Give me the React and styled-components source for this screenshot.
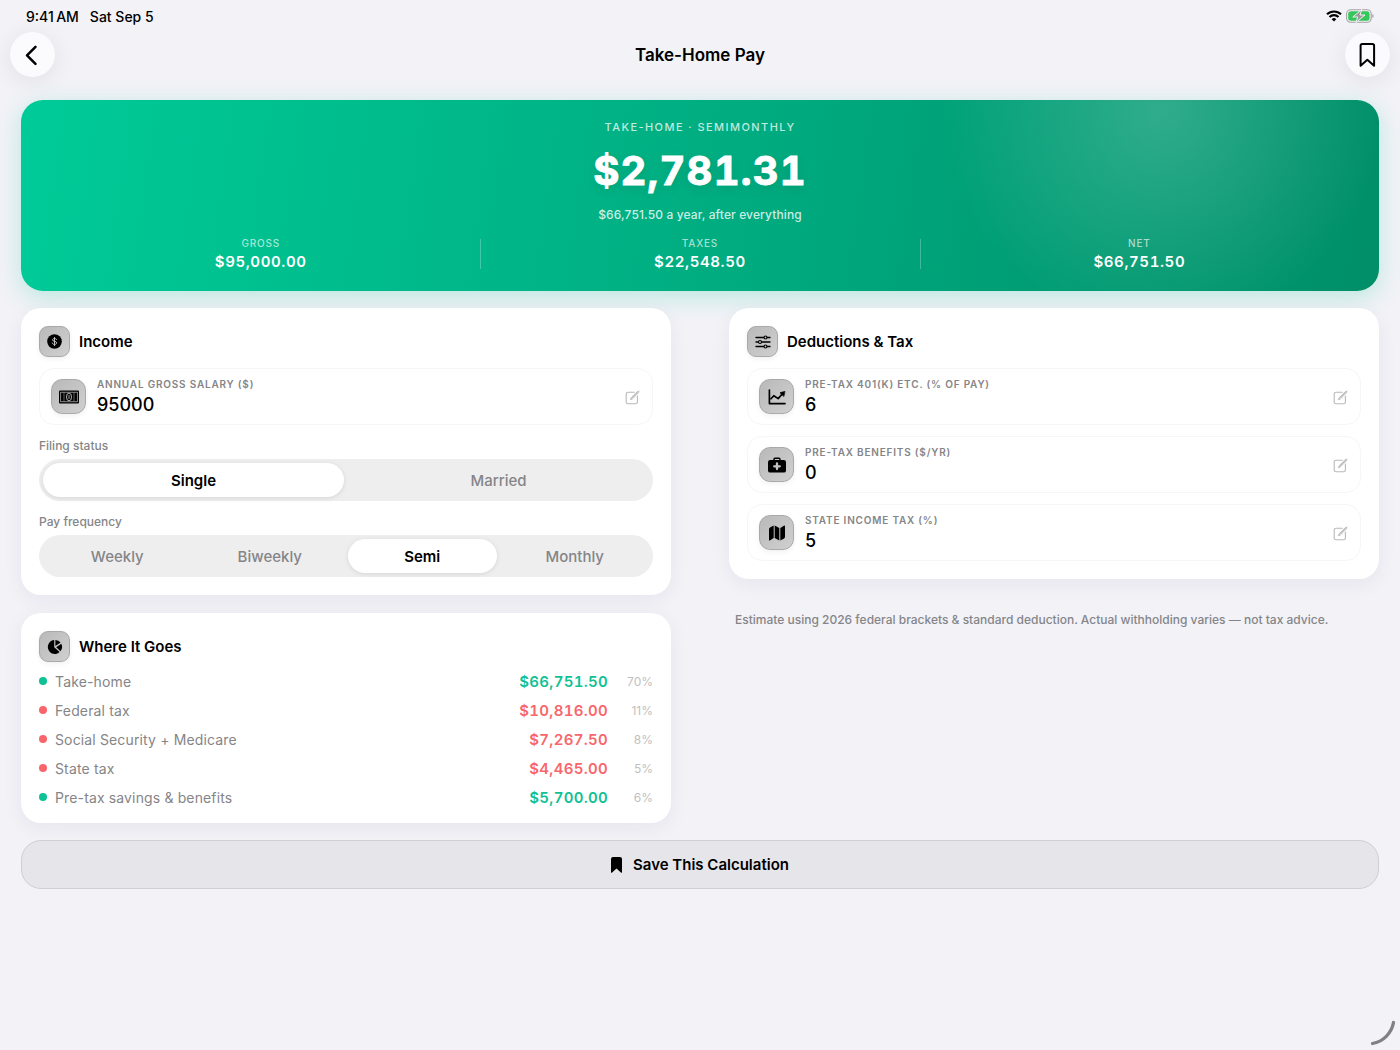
import React, { useState } from "react";
import styled, { createGlobalStyle } from "styled-components";

const BREAKDOWN = [
  { name: "Take-home", amount: "$66,751.50", share: "70%", kind: "keep" },
  { name: "Federal tax", amount: "$10,816.00", share: "11%", kind: "tax" },
  { name: "Social Security + Medicare", amount: "$7,267.50", share: "8%", kind: "tax" },
  { name: "State tax", amount: "$4,465.00", share: "5%", kind: "tax" },
  { name: "Pre-tax savings & benefits", amount: "$5,700.00", share: "6%", kind: "keep" },
];

const TOTALS = [
  { name: "Gross", amount: "$95,000.00" },
  { name: "Taxes", amount: "$22,548.50" },
  { name: "Net", amount: "$66,751.50" },
];

const COLORS = { keep: "#0fc194", tax: "#f8666b" };

export default function App() {
  const [form, setForm] = useState({
    salary: "95000",
    retirement: "6",
    benefits: "0",
    stateTax: "5",
    status: "Single",
    frequency: "Semi",
  });

  const update = (name, value) => setForm({ ...form, [name]: value });

  return (
    <Page>
      <GlobalStyle />
      <StatusBar>
        <StatusText>
          <span>9:41{"\u2009"}AM</span>
          <span>Sat Sep 5</span>
        </StatusText>
        <StatusIcons>
          <WifiIcon />
          <BatteryIcon />
        </StatusIcons>
      </StatusBar>
      <NavBar>
        <RoundButton type="button" aria-label="Back">
          <svg width="24" height="24" viewBox="0 0 24 24" fill="none" stroke="#000" strokeWidth="2.5" strokeLinecap="round" strokeLinejoin="round">
            <path d="M14.500 3.800 6 12.400l8.500 8.500" />
          </svg>
        </RoundButton>
        <h1>Take-Home Pay</h1>
        <RoundButton type="button" aria-label="Bookmark">
          <svg width="24" height="26" viewBox="0 0 24 26" fill="none" stroke="#000" strokeWidth="2" strokeLinejoin="round">
            <path d="M4.600 3.800q0-1.800 1.800-1.800h9.900q1.800 0 1.800 1.800v20L11.350 17.700 4.600 23.800z" />
          </svg>
        </RoundButton>
      </NavBar>

      <Content>
        <Hero>
          <HeroLabel>Take-home · Semimonthly</HeroLabel>
          <HeroAmount>$2,781.31</HeroAmount>
          <HeroNote>$66,751.50 a year, after everything</HeroNote>
          <Totals>
            {TOTALS.map((t) => (
              <Total key={t.name}>
                <dt>{t.name}</dt>
                <dd>{t.amount}</dd>
              </Total>
            ))}
          </Totals>
        </Hero>

        <Columns>
          <Column>
            <Card>
              <CardHeader>
                <Tile $size={31}>
                  <DollarIcon />
                </Tile>
                <h2>Income</h2>
              </CardHeader>
              <Field
                icon={<BanknoteIcon />}
                id="salary"
                label="Annual gross salary ($)"
                value={form.salary}
                onChange={update}
              />
              <Segmented
                name="status"
                label="Filing status"
                options={["Single", "Married"]}
                value={form.status}
                onChange={update}
              />
              <Segmented
                name="frequency"
                label="Pay frequency"
                options={["Weekly", "Biweekly", "Semi", "Monthly"]}
                value={form.frequency}
                onChange={update}
              />
            </Card>

            <Card>
              <CardHeader>
                <Tile $size={31}>
                  <PieIcon />
                </Tile>
                <h2>Where It Goes</h2>
              </CardHeader>
              <Breakdown>
                <tbody>
                  {BREAKDOWN.map((row) => (
                    <BreakdownRow key={row.name} $color={COLORS[row.kind]}>
                      <th scope="row">{row.name}</th>
                      <Amount>{row.amount}</Amount>
                      <Share>{row.share}</Share>
                    </BreakdownRow>
                  ))}
                </tbody>
              </Breakdown>
            </Card>
          </Column>

          <Column>
            <Card>
              <CardHeader>
                <Tile $size={31}>
                  <SlidersIcon />
                </Tile>
                <h2>Deductions &amp; Tax</h2>
              </CardHeader>
              <Field
                icon={<ChartIcon />}
                id="retirement"
                label="Pre-tax 401(k) etc. (% of pay)"
                value={form.retirement}
                onChange={update}
              />
              <Field
                icon={<CaseIcon />}
                id="benefits"
                label="Pre-tax benefits ($/yr)"
                value={form.benefits}
                onChange={update}
              />
              <Field
                icon={<MapIcon />}
                id="stateTax"
                label="State income tax (%)"
                value={form.stateTax}
                onChange={update}
              />
            </Card>
            <Disclaimer>
              Estimate using 2026 federal brackets &amp; standard deduction. Actual withholding varies — not tax advice.
            </Disclaimer>
          </Column>
        </Columns>

        <SaveButton type="button">
          <svg width="11" height="16" viewBox="0 0 11 16">
            <path d="M0 2q0-2 2-2h7q2 0 2 2v13q0 1.4-1.1.5L5.500 11.600 1.100 15.500Q0 16.400 0 15z" />
          </svg>
          Save This Calculation
        </SaveButton>
      </Content>

      <ResizeHandle width="26" height="26" viewBox="0 0 26 26">
        <path d="M2.500 23.500A26 26 0 0 0 23.500 2.500" fill="none" stroke="#808084" strokeWidth="3.300" strokeLinecap="round" />
      </ResizeHandle>
    </Page>
  );
}

function Field({ icon, id, label, value, onChange }) {
  return (
    <FieldBox>
      <Tile $size={35}>{icon}</Tile>
      <FieldText>
        <label htmlFor={id}>{label}</label>
        <input
          id={id}
          type="text"
          inputMode="decimal"
          value={value}
          onChange={(e) => onChange(id, e.target.value)}
        />
      </FieldText>
      <EditIcon />
    </FieldBox>
  );
}

function Segmented({ name, label, options, value, onChange }) {
  return (
    <SegmentGroup>
      <legend>{label}</legend>
      <SegmentTrack>
        {options.map((option) => (
          <Segment key={option} $active={option === value}>
            <input
              type="radio"
              name={name}
              value={option}
              checked={option === value}
              onChange={() => onChange(name, option)}
            />
            {option}
          </Segment>
        ))}
      </SegmentTrack>
    </SegmentGroup>
  );
}

const WifiIcon = () => (
  <svg width="16" height="12" viewBox="0 0 16 12" fill="none" stroke="#000" strokeWidth="2.1">
    <path d="M1 4.300a10 10 0 0 1 14 0" />
    <path d="M3.500 7a6.400 6.400 0 0 1 9 0" />
    <path d="M8 11.600 5.700 9.200a3.300 3.300 0 0 1 4.600 0z" fill="#000" stroke="none" />
  </svg>
);

const BatteryIcon = () => (
  <svg width="28" height="14" viewBox="0 0 28 14">
    <rect x="0.600" y="0.700" width="24.600" height="12.600" rx="4" fill="none" stroke="#a3a3a6" strokeWidth="1.100" />
    <rect x="2.200" y="2.300" width="21.400" height="9.400" rx="2.600" fill="#34c759" />
    <path d="M26.300 5v4q1.400-.6 1.400-2t-1.400-2z" fill="#a3a3a6" />
    <path d="M15.800 0.400 6.800 8h5l-2 5.600L19 6h-5z" fill="#9b9b9e" stroke="#f2f2f7" strokeWidth="1" strokeLinejoin="round" />
  </svg>
);

const DollarIcon = () => (
  <svg width="15" height="15" viewBox="0 0 15 15">
    <circle cx="7.500" cy="7.500" r="7.300" />
    <path d="M9.700 5.700C9.400 4.900 8.600 4.500 7.500 4.500c-1.200 0-2 .6-2 1.400 0 1.900 4.200 1 4.200 3 0 .9-.9 1.500-2.200 1.500-1.200 0-2.100-.5-2.300-1.400M7.500 3.500v8" fill="none" stroke="#c4c4c4" strokeWidth="1" strokeLinecap="round" />
  </svg>
);

const BanknoteIcon = () => (
  <svg width="20" height="14" viewBox="0 0 20 14">
    <rect x="0" y="0.500" width="20" height="13" rx="1" />
    <rect x="1.700" y="2.200" width="16.600" height="9.600" fill="none" stroke="#bdbdbd" strokeWidth="0.700" />
    <path d="M5 2.200v9.600M15 2.200v9.600" stroke="#bdbdbd" strokeWidth="0.500" />
    <ellipse cx="10" cy="7" rx="2.500" ry="3.900" fill="#000" stroke="#c4c4c4" strokeWidth="0.900" />
    <path d="M10 5v4" stroke="#c4c4c4" strokeWidth="0.800" />
  </svg>
);

const PieIcon = () => (
  <svg width="16" height="16" viewBox="0 0 16 16">
    <path d="M7.200 1A7 7 0 1 0 12.600 13.100L7.200 8.300z" />
    <path d="M8.400.9a7 7 0 0 1 5.200 2.700L8.400 7z" />
    <path d="M14.300 4.700a7 7 0 0 1-.8 7.500L9.200 8.200z" />
  </svg>
);

const SlidersIcon = () => (
  <svg width="16" height="14" viewBox="0 0 16 14" fill="none" stroke="#000" strokeWidth="1.400" strokeLinecap="round">
    <path d="M1 2.500h7.700M12.300 2.500H15M1 7h2.200M6.800 7H15M1 11.500h7.700M12.300 11.500H15" />
    <circle cx="10.500" cy="2.500" r="1.500" strokeWidth="1.100" />
    <circle cx="5" cy="7" r="1.500" strokeWidth="1.100" />
    <circle cx="10.500" cy="11.500" r="1.500" strokeWidth="1.100" />
  </svg>
);

const ChartIcon = () => (
  <svg width="18" height="16" viewBox="0 0 18 16" fill="none" stroke="#000" strokeWidth="1.700" strokeLinecap="round" strokeLinejoin="round">
    <path d="M1.400 1v13.600H17" />
    <path d="M3 9.800 5.800 6.700l4.400 2.900L14.200 5" />
    <path d="M16.600 2.600 12 3.700l3.600 3.500z" fill="#000" strokeWidth="0.800" />
  </svg>
);

const CaseIcon = () => (
  <svg width="18" height="16" viewBox="0 0 18 16">
    <path d="M6 3.600V2.200Q6 1.200 7 1.200h4q1 0 1 1v1.400" fill="none" stroke="#000" strokeWidth="1.400" />
    <rect x="0" y="3" width="18" height="12.600" rx="2.200" />
    <path d="M9 6.500v5.600M6.200 9.300h5.600" stroke="#c4c4c4" strokeWidth="2.300" strokeLinecap="round" />
  </svg>
);

const MapIcon = () => (
  <svg width="16" height="16" viewBox="0 0 16 16">
    <path d="M0 4.200Q0 3 1 2.400L4.700.4v12.700L1.200 15.300Q0 16 0 14.700z" />
    <path d="M5.700.4l4.600 2.500v12.700l-4.600-2.500z" />
    <path d="M11.300 2.900l3.500-2.200Q16 0 16 1.300v10.500q0 1.200-1 1.800l-3.700 2z" />
  </svg>
);

const EditIcon = () => (
  <svg width="15" height="17" viewBox="0 0 15 17" fill="none" stroke="#b9b9bb" strokeWidth="1.100" strokeLinecap="round" strokeLinejoin="round">
    <path d="M9.300 4.200H3Q1.200 4.200 1.200 6v8Q1.200 15.800 3 15.800h7.600q1.800 0 1.800-1.800V8" />
    <path d="M13.900 3.200 6.700 10.300l-.8.900M12.900 3.100 6 9.900l-.5 1.700 1.700-.5 6.900-6.900" strokeWidth="0.900" />
  </svg>
);

const GlobalStyle = createGlobalStyle`
  * {
    box-sizing: border-box;
  }
  body {
    margin: 0;
    background: #f2f2f7;
    color: #000;
    font-family: Inter, "Liberation Sans", sans-serif;
  }
  h1, h2, p, dl, dd {
    margin: 0;
  }
  button, input {
    font: inherit;
    color: inherit;
  }
`;

const Page = styled.main`
  min-height: 100vh;
`;

const StatusBar = styled.div`
  display: flex;
  align-items: center;
  justify-content: space-between;
  height: 32px;
  padding: 0 26px;
`;

const StatusText = styled.div`
  display: flex;
  gap: 11px;
  font-size: 14px;
  font-weight: 500;
`;

const StatusIcons = styled.div`
  display: flex;
  align-items: center;
  gap: 4px;
`;

const NavBar = styled.header`
  display: flex;
  align-items: center;
  justify-content: space-between;
  padding: 0 10px;

  h1 {
    font-size: 17px;
    font-weight: 600;
  }
`;

const RoundButton = styled.button`
  display: grid;
  place-items: center;
  width: 45px;
  height: 45px;
  padding: 0;
  border: 0;
  border-radius: 50%;
  background: #fbfbfe;
  box-shadow: 0 4px 24px rgba(0, 0, 0, 0.08);
`;

const Content = styled.div`
  display: flex;
  flex-direction: column;
  gap: 17px;
  padding: 23px 21px;
`;

const Hero = styled.section`
  display: flex;
  flex-direction: column;
  align-items: center;
  padding: 18px 20px 20px;
  border-radius: 22px;
  background: radial-gradient(circle at 84% 6%, rgba(255, 255, 255, 0.19), rgba(255, 255, 255, 0) 220px),
    linear-gradient(98deg, #00cb98 0%, #00b184 45%, #009f76 72%, #008f68 100%);
  box-shadow: 0 6px 24px rgba(0, 200, 150, 0.24);
  color: #fff;
`;

const HeroLabel = styled.p`
  color: rgba(255, 255, 255, 0.75);
  font-size: 11px;
  font-weight: 500;
  line-height: 18px;
  letter-spacing: 0.13em;
  text-transform: uppercase;
`;

const HeroAmount = styled.p`
  margin: 10px 0;
  font-size: 40px;
  font-weight: 700;
  line-height: 50px;
  letter-spacing: 0.03em;
  font-variant-numeric: tabular-nums;
  -webkit-text-stroke: 1px #fff;
  stroke-linejoin: round;
  text-shadow: 0 4px 12px rgba(0, 0, 0, 0.1);
`;

const HeroNote = styled.p`
  color: rgba(255, 255, 255, 0.8);
  font-size: 12px;
  font-weight: 500;
  line-height: 18px;
  letter-spacing: 0.01em;
`;

const Totals = styled.dl`
  display: grid;
  grid-template-columns: repeat(3, 1fr);
  align-self: stretch;
  margin-top: 13px;
`;

const Total = styled.div`
  display: flex;
  flex-direction: column;
  align-items: center;
  gap: 4px;

  & + & {
    background: linear-gradient(rgba(255, 255, 255, 0.25), rgba(255, 255, 255, 0.25)) left center / 1px 30px no-repeat;
  }
  dt {
    color: rgba(255, 255, 255, 0.65);
    font-size: 10px;
    font-weight: 500;
    line-height: 12px;
    letter-spacing: 0.08em;
    text-transform: uppercase;
  }
  dd {
    font-size: 15px;
    font-weight: 600;
    line-height: 18px;
    letter-spacing: 0.04em;
    font-variant-numeric: tabular-nums;
  }
`;

const Columns = styled.div`
  display: grid;
  grid-template-columns: 1fr 1fr;
  align-items: start;
  gap: 58px;
`;

const Column = styled.div`
  display: flex;
  flex-direction: column;
  gap: 18px;
`;

const Card = styled.section`
  display: flex;
  flex-direction: column;
  gap: 11px;
  padding: 18px;
  border-radius: 20px;
  background: #fff;
  box-shadow: 0 5px 20px rgba(30, 30, 60, 0.06);
`;

const CardHeader = styled.header`
  display: flex;
  align-items: center;
  gap: 9px;

  h2 {
    font-size: 15px;
    font-weight: 600;
  }
`;

const Tile = styled.span`
  display: grid;
  place-items: center;
  flex: none;
  width: ${(props) => props.$size}px;
  height: ${(props) => props.$size}px;
  border: 1px solid #a9a9a9;
  border-radius: ${(props) => (props.$size > 32 ? 11 : 9)}px;
  background: linear-gradient(135deg, #b9b9b9, #d0d0d0);
  box-shadow: 0 2px 5px rgba(0, 0, 0, 0.06);
`;

const FieldBox = styled.div`
  display: flex;
  align-items: center;
  gap: 11px;
  height: 57px;
  padding: 0 12px 0 11px;
  border: 1px solid #f6f6f6;
  border-radius: 15px;
`;

const FieldText = styled.div`
  display: flex;
  flex-direction: column;
  flex: 1;
  gap: 4px;

  label {
    color: #858587;
    font-size: 10px;
    font-weight: 600;
    line-height: 12px;
    letter-spacing: 0.08em;
    text-transform: uppercase;
  }
  input {
    width: 100%;
    height: 22px;
    padding: 0;
    border: 0;
    outline: 0;
    background: none;
    font-size: 18px;
    font-weight: 500;
  }
`;

const SegmentGroup = styled.fieldset`
  margin: 0;
  padding: 0;
  border: 0;

  legend {
    margin-bottom: 4px;
    padding: 1px 0 0;
    color: #858587;
    font-size: 12px;
    font-weight: 500;
    line-height: 18px;
  }
`;

const SegmentTrack = styled.div`
  display: grid;
  grid-auto-flow: column;
  grid-auto-columns: 1fr;
  gap: 4px;
  height: 42px;
  padding: 4px;
  border-radius: 21px;
  background: #eeeeef;
`;

const Segment = styled.label`
  display: grid;
  place-items: center;
  border-radius: 17px;
  background: ${(props) => (props.$active ? "#fff" : "transparent")};
  box-shadow: ${(props) => (props.$active ? "0 1px 5px rgba(0, 0, 0, 0.1)" : "none")};
  color: ${(props) => (props.$active ? "#000" : "#858588")};
  font-size: 15px;
  font-weight: ${(props) => (props.$active ? 600 : 500)};

  input {
    position: absolute;
    opacity: 0;
    pointer-events: none;
  }
`;

const Breakdown = styled.table`
  display: block;

  tbody {
    display: flex;
    flex-direction: column;
    gap: 13px;
  }
`;

const BreakdownRow = styled.tr`
  display: flex;
  align-items: center;
  height: 16px;
  color: ${(props) => props.$color};

  &::before {
    content: "";
    width: 8px;
    height: 8px;
    margin-right: 8px;
    border-radius: 50%;
    background: currentColor;
  }
  th {
    flex: 1;
    padding: 0;
    color: #858587;
    font-size: 14px;
    font-weight: 400;
    letter-spacing: 0.01em;
    text-align: left;
  }
`;

const Amount = styled.td`
  padding: 0;
  font-size: 15px;
  font-weight: 600;
  letter-spacing: 0.02em;
  font-variant-numeric: tabular-nums;
`;

const Share = styled.td`
  width: 45px;
  padding: 0;
  color: #bfbfc1;
  font-size: 12px;
  text-align: right;
`;

const Disclaimer = styled.p`
  padding: 14px 6px;
  color: #858589;
  font-size: 12px;
  font-weight: 500;
  line-height: 18px;
`;

const SaveButton = styled.button`
  display: flex;
  align-items: center;
  justify-content: center;
  gap: 11px;
  height: 49px;
  border: 1px solid #cfcfd3;
  border-radius: 20px;
  background: #e5e5ea;
  font-size: 15px;
  font-weight: 600;
`;

const ResizeHandle = styled.svg`
  position: fixed;
  right: 4px;
  bottom: 4px;
`;
